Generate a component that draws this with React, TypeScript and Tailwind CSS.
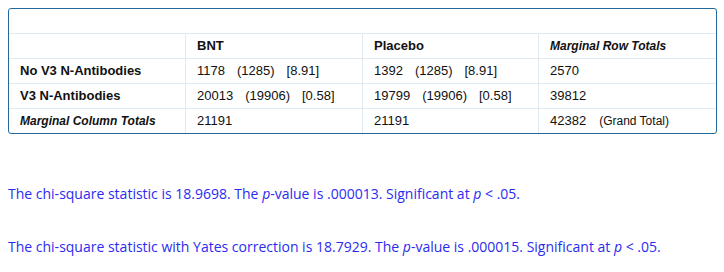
import React from "react";

const rows = [
  { label: "No V3 N-Antibodies", bnt: ["1178", "(1285)", "[8.91]"], pla: ["1392", "(1285)", "[8.91]"], total: "2570" },
  { label: "V3 N-Antibodies", bnt: ["20013", "(19906)", "[0.58]"], pla: ["19799", "(19906)", "[0.58]"], total: "39812" },
];

const cell = "h-[25px] flex items-center px-[11px] border-t border-[#dfeaf2]";
const divider = "border-l border-[#dfeaf2]";

function Triple({ v }: { v: string[] }) {
  return (
    <span>
      {v[0]}
      <span className="ml-[12px]">{v[1]}</span>
      <span className="ml-[12px]">{v[2]}</span>
    </span>
  );
}

export default function App() {
  return (
    <div className="bg-white w-[724px] h-[272px] pt-2 px-2" style={{ fontFamily: "Liberation Sans, Arial, sans-serif" }}>
      <div className="w-[709px] border border-[#23689c] rounded-[3px] text-[13px] text-[#111]">
        <div className="h-[24px]" />
        <div className="grid grid-cols-[176px_177px_176px_1fr]">
          <div className={cell} />
          <div className={`${cell} ${divider} font-bold`}>BNT</div>
          <div className={`${cell} ${divider} font-bold`}>Placebo</div>
          <div className={`${cell} ${divider} font-bold italic text-[12px]`}>Marginal Row Totals</div>

          {rows.map((r) => (
            <React.Fragment key={r.label}>
              <div className={`${cell} font-bold`}>{r.label}</div>
              <div className={`${cell} ${divider}`}><Triple v={r.bnt} /></div>
              <div className={`${cell} ${divider}`}><Triple v={r.pla} /></div>
              <div className={`${cell} ${divider}`}>{r.total}</div>
            </React.Fragment>
          ))}

          <div className={`${cell} font-bold italic text-[12px]`}>Marginal Column Totals</div>
          <div className={`${cell} ${divider}`}>21191</div>
          <div className={`${cell} ${divider}`}>21191</div>
          <div className={`${cell} ${divider}`}>
            42382
            <span className="ml-[13px] text-[12px]">(Grand Total)</span>
          </div>
        </div>
      </div>

      <div className="text-[14px] leading-[21px] text-[#2b2bf0]" style={{ fontFamily: "'Open Sans', sans-serif" }}>
        <p className="mt-[49px]">
          The chi-square statistic is 18.9698. The <i>p</i>-value is .000013. Significant at <i>p</i> &lt; .05.
        </p>
        <p className="mt-[32px]">
          The chi-square statistic with Yates correction is 18.7929. The <i>p</i>-value is .000015. Significant at <i>p</i> &lt; .05.
        </p>
      </div>
    </div>
  );
}
